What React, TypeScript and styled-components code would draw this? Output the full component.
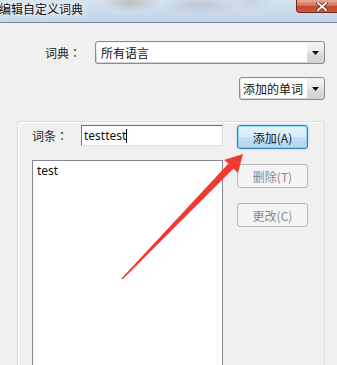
import React from "react";
import styled, { createGlobalStyle } from "styled-components";

const Global = createGlobalStyle`
  html, body { margin: 0; padding: 0; background: #f0f0f0; }
  body {
    font-family: "Noto Sans", "Noto Sans CJK SC", sans-serif;
    font-size: 12px;
    color: #000;
  }
`;

const Window = styled.div`
  position: relative;
  width: 337px;
  height: 365px;
  overflow: hidden;
  background: #f0f0f0;
  display: flex;
  flex-direction: column;
`;

const TitleBar = styled.div`
  height: 22px;
  flex: none;
  display: flex;
  align-items: flex-start;
  justify-content: space-between;
  border-bottom: 1px solid #75879b;
  background:
    radial-gradient(ellipse 30px 10px at 130px 2px, rgba(170, 160, 140, 0.5), transparent),
    radial-gradient(ellipse 40px 12px at 200px 4px, rgba(160, 165, 175, 0.4), transparent),
    radial-gradient(ellipse 25px 10px at 250px 2px, rgba(190, 200, 215, 0.6), transparent),
    linear-gradient(180deg, #d6e3ef 0%, #c8daeb 60%, #c2d6ea 100%);
`;

const Title = styled.div`
  font-family: "Noto Sans CJK SC", "Noto Sans", sans-serif;
  font-size: 12px;
  line-height: 18px;
  margin-left: -1px;
  color: #111;
  text-shadow: 0 0 5px #fff, 0 0 9px rgba(255, 255, 255, 0.9);
`;

const CloseButton = styled.div`
  width: 45px;
  height: 13px;
  margin-right: -4px;
  box-sizing: border-box;
  border: 1px solid #6b2a1f;
  border-top: none;
  border-radius: 0 0 0 4px;
  background: linear-gradient(180deg, #e9a999 0%, #d6745f 45%, #c2452d 55%, #d25a3c 100%);
  display: flex;
  align-items: center;
  justify-content: center;
  padding-left: 6px;
`;

const Content = styled.div`
  flex: 1;
  display: flex;
  flex-direction: column;
  padding: 0 12px 0 17px;
`;

const DictRow = styled.div`
  display: flex;
  align-items: center;
  margin-top: 18px;
  padding-left: 28px;
`;

const Label = styled.div<{ $w: number }>`
  width: ${(p) => p.$w}px;
  flex: none;
  font-family: "Noto Sans CJK SC", sans-serif;
  font-size: 12px;
  color: #1e1e1e;
`;

const Colon = styled.span`
  font-family: "Noto Sans CJK TC", "Noto Sans CJK SC", sans-serif;
`;

const FilterRow = styled.div`
  display: flex;
  justify-content: flex-end;
  margin-top: 13px;
`;

const Combo = styled.div<{ $w?: number }>`
  ${(p) => (p.$w ? `width: ${p.$w}px;` : "flex: 1;")}
  height: 23px;
  box-sizing: border-box;
  border: 1px solid #8a8a8a;
  border-radius: 3px;
  display: flex;
  overflow: hidden;
  background: linear-gradient(180deg, #f4f4f4 0%, #e8e8e8 50%, #dcdcdc 51%, #d2d2d2 100%);
`;

const ComboField = styled.div<{ $pad: number }>`
  flex: 1;
  background: #fff;
  margin: 1px 0 1px 1px;
  padding-left: ${(p) => p.$pad}px;
  display: flex;
  align-items: center;
  font-family: "Noto Sans CJK SC", sans-serif;
  font-size: 12px;
  color: #111;
  white-space: nowrap;
`;

const ComboDrop = styled.div`
  width: 17px;
  flex: none;
  display: flex;
  align-items: center;
  justify-content: center;
`;

const Group = styled.div`
  margin-top: 21px;
  height: 300px;
  box-sizing: border-box;
  border: 1px solid #d5dfe5;
  border-radius: 3px;
  box-shadow: inset 1px 1px 0 #fff;
  padding: 3px 16px 0 14px;
  display: grid;
  grid-template-columns: 191px 71px;
  column-gap: 14px;
  align-items: start;
`;

const LeftColumn = styled.div`
  display: flex;
  flex-direction: column;
  gap: 14px;
`;

const EntryRow = styled.div`
  display: flex;
  align-items: center;
`;

const TextInput = styled.div`
  width: 142px;
  height: 21px;
  box-sizing: border-box;
  background: #fff;
  border-top: 1px solid #6a6a6a;
  border-left: 1px solid #7a7a7a;
  border-right: 1px solid #dadada;
  border-bottom: 1px solid #e2e2e2;
  padding-left: 2px;
  display: flex;
  align-items: center;
  font-size: 12px;
  color: #111;
`;

const Caret = styled.span`
  display: inline-block;
  width: 0;
  height: 14px;
  border-left: 1px solid #000;
`;

const ListBox = styled.div`
  height: 220px;
  box-sizing: border-box;
  background: #fff;
  border: 1px solid #828790;
  padding: 2px 4px;
  font-size: 12px;
  line-height: 16px;
  color: #111;
`;

const ButtonColumn = styled.div`
  display: flex;
  flex-direction: column;
  gap: 15px;
`;

const Button = styled.div<{ $primary?: boolean; $disabled?: boolean }>`
  height: 24px;
  box-sizing: border-box;
  border-radius: 3px;
  display: flex;
  align-items: center;
  justify-content: center;
  font-family: "Noto Sans CJK SC", "Noto Sans", sans-serif;
  font-size: 12px;
  ${(p) =>
    p.$primary
      ? `
    border: 1px solid #3c7fb1;
    background: linear-gradient(180deg, #e5f4fc 0%, #d6eefb 48%, #bfe2f6 52%, #abd6ee 100%);
    box-shadow: inset 0 0 0 1px rgba(120, 200, 240, 0.7), 0 0 2px rgba(80, 170, 230, 0.6);
    color: #1a1a1a;
  `
      : p.$disabled
      ? `
    border: 1px solid #b4b8bb;
    background: #f4f4f4;
    color: #8a8a8a;
  `
      : `
    border: 1px solid #707070;
    background: linear-gradient(180deg, #f2f2f2 0%, #ebebeb 50%, #dddddd 51%, #cfcfcf 100%);
    color: #000;
  `}
`;

const Overlay = styled.svg`
  position: absolute;
  left: 0;
  top: 0;
  pointer-events: none;
`;

const DownArrow = () => (
  <svg width="7" height="4" viewBox="0 0 7 4">
    <polygon points="0,0 7,0 3.5,4" fill="#111" />
  </svg>
);

export default function App() {
  return (
    <Window>
      <Global />
      <TitleBar>
        <Title>编辑自定义词典</Title>
        <CloseButton>
          <svg width="12" height="9" viewBox="0 0 12 9">
            <path d="M2 1 L10 8 M10 1 L2 8" stroke="#5a1a10" strokeWidth="3.2" strokeLinecap="square" />
            <path d="M2 1 L10 8 M10 1 L2 8" stroke="#fff" strokeWidth="2" strokeLinecap="square" />
          </svg>
        </CloseButton>
      </TitleBar>
      <Content>
        <DictRow>
          <Label $w={50}>
            词典<Colon>：</Colon>
          </Label>
          <Combo>
            <ComboField $pad={4}>所有语言</ComboField>
            <ComboDrop>
              <DownArrow />
            </ComboDrop>
          </Combo>
        </DictRow>
        <FilterRow>
          <Combo $w={86}>
            <ComboField $pad={2}>添加的单词</ComboField>
            <ComboDrop>
              <DownArrow />
            </ComboDrop>
          </Combo>
        </FilterRow>
        <Group>
          <LeftColumn>
            <EntryRow>
              <Label $w={49}>
                词条<Colon>：</Colon>
              </Label>
              <TextInput>
                testtest
                <Caret />
              </TextInput>
            </EntryRow>
            <ListBox>test</ListBox>
          </LeftColumn>
          <ButtonColumn>
            <Button $primary>添加(A)</Button>
            <Button $disabled>删除(T)</Button>
            <Button $disabled>更改(C)</Button>
          </ButtonColumn>
        </Group>
      </Content>
      <Overlay width="337" height="365" viewBox="0 0 337 365">
        <polygon
          points="243,154 238,173 233.5,168.5 123,279 121,279 228.5,163.5 224,160"
          fill="#ee3a30"
        />
      </Overlay>
    </Window>
  );
}
